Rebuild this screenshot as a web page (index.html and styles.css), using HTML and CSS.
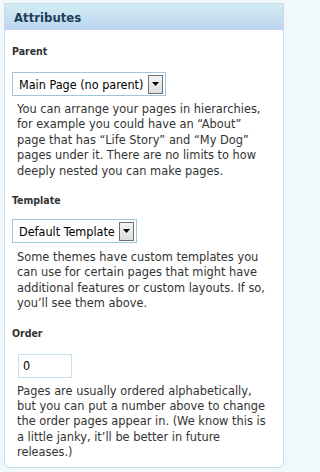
FILE: index.html
```html
<!DOCTYPE html>
<html>
<head>
<meta charset="utf-8">
<link rel="stylesheet" href="styles.css">
</head>
<body>
<div class="panel">
  <div class="panel-head">Attributes</div>
  <div class="panel-body">
    <div class="label">Parent</div>
    <div class="select select-parent">
      <span class="select-text">Main Page (no parent)</span>
      <span class="select-btn"><svg width="7" height="4" viewBox="0 0 7 4"><path d="M0 0H7L3.5 4Z" fill="#000"/></svg></span>
    </div>
    <p class="help">You can arrange your pages in hierarchies,<br>for example you could have an “About”<br>page that has “Life Story” and “My Dog”<br>pages under it. There are no limits to how<br>deeply nested you can make pages.</p>
    <div class="label">Template</div>
    <div class="select select-template">
      <span class="select-text">Default Template</span>
      <span class="select-btn"><svg width="7" height="4" viewBox="0 0 7 4"><path d="M0 0H7L3.5 4Z" fill="#000"/></svg></span>
    </div>
    <p class="help">Some themes have custom templates you<br>can use for certain pages that might have<br>additional features or custom layouts. If so,<br>you’ll see them above.</p>
    <div class="label">Order</div>
    <div class="order-input">0</div>
    <p class="help">Pages are usually ordered alphabetically,<br>but you can put a number above to change<br>the order pages appear in. (We know this is<br>a little janky, it’ll be better in future<br>releases.)</p>
  </div>
</div>
</body>
</html>
```

FILE: styles.css
```css
html, body {
  margin: 0;
  padding: 0;
  background: #f0f8fb;
}
body {
  font-family: "DejaVu Sans", sans-serif;
  color: #333;
}
.panel {
  width: 278px;
  margin: 3px 0 6px 4px;
  border: 1px solid #c2dcea;
  border-radius: 0 0 6px 6px;
  background: #fff;
}
.panel-head {
  height: 26px;
  line-height: 27px;
  padding-left: 9px;
  font-family: "DejaVu Sans Condensed", "DejaVu Sans", sans-serif;
  font-weight: bold;
  font-size: 13px;
  color: #1e3e58;
  background: linear-gradient(#d2edf4, #bcd4ee);
}
.panel-body {
  padding: 14px 4px 6px 7px;
}
.label {
  font-family: "DejaVu Sans Condensed", "DejaVu Sans", sans-serif;
  font-weight: bold;
  font-size: 10.5px;
  color: #333;
  line-height: 14px;
}
.select {
  display: inline-flex;
  align-items: center;
  height: 22px;
  border: 1px solid #9ec6dc;
  margin-top: 14px;
  padding-left: 6px;
  padding-right: 2px;
  background: #fff;
  font-family: "DejaVu Sans Condensed", "DejaVu Sans", sans-serif;
  font-size: 12.5px;
  color: #000;
}
.select-parent { width: 144px; }
.select-template { width: 115px; margin-top: 12px; }
.select-text {
  flex: 1;
  white-space: nowrap;
  overflow: hidden;
}
.select-btn {
  width: 13px;
  height: 17px;
  border: 1px solid #707070;
  background: linear-gradient(#f4f4f4, #dedede);
  display: flex;
  align-items: center;
  justify-content: center;
}
.select-btn svg { display: block; }
.help {
  margin: 6px 0 14px 5px;
  font-size: 11.4px;
  line-height: 15.4px;
  color: #333;
  white-space: nowrap;
}
.select-template + .help { margin-top: 7px; }
.help:last-child { margin-bottom: 0; }
.order-input {
  width: 48px;
  height: 22px;
  line-height: 22px;
  margin: 14px 0 0 6px;
  padding-left: 4px;
  border: 1px solid #c6e0ee;
  font-family: "DejaVu Sans Condensed", "DejaVu Sans", sans-serif;
  font-size: 12.5px;
  color: #000;
}
```
